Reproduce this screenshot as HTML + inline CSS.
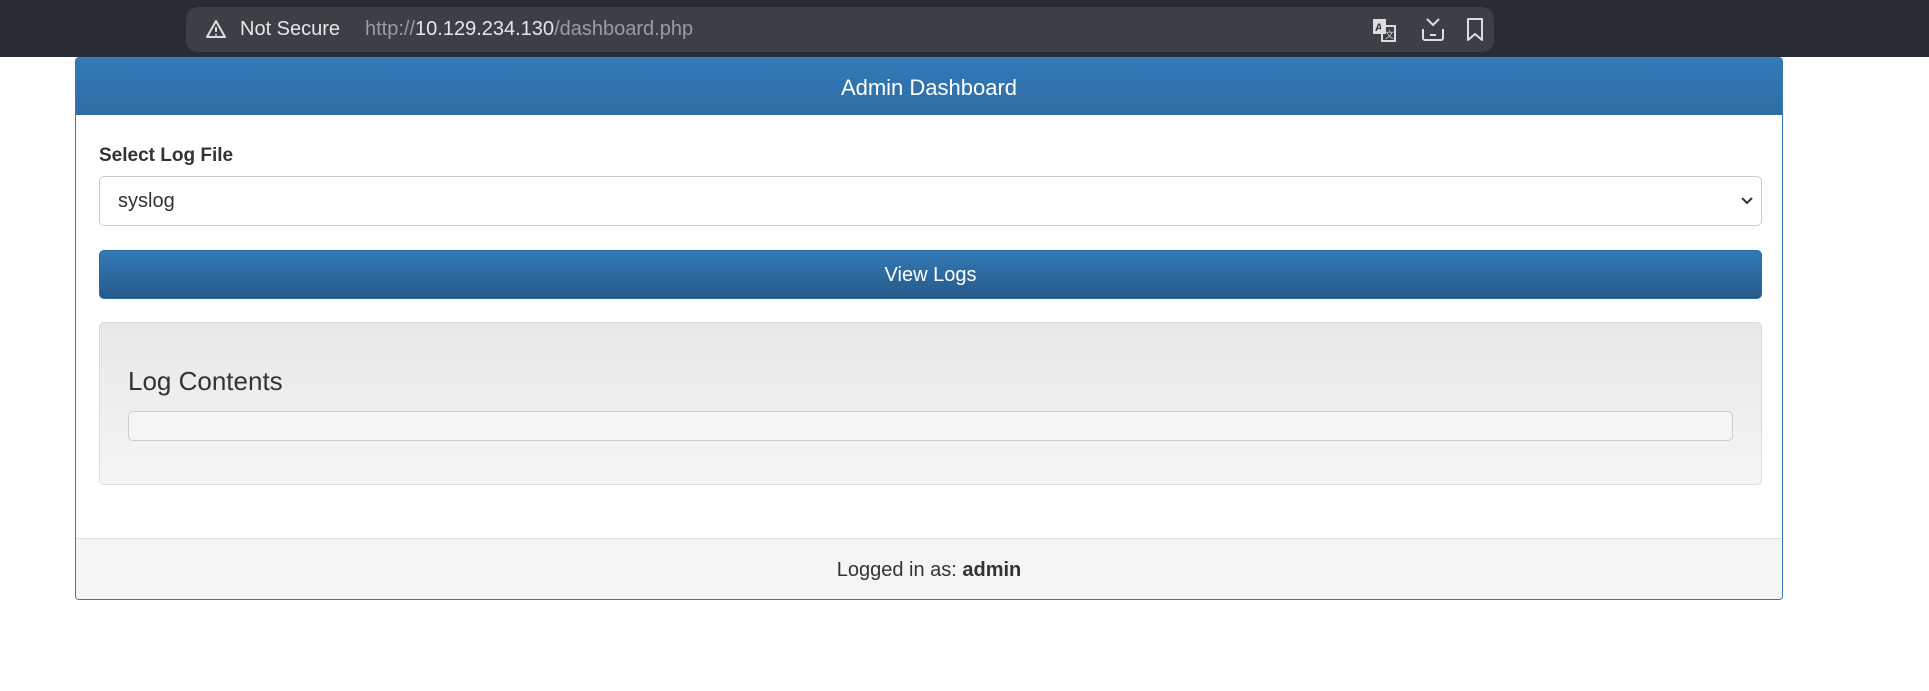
<!DOCTYPE html>
<html><head><style>
*{box-sizing:border-box;margin:0;padding:0}
body{width:1929px;height:691px;background:#fff;font-family:"Liberation Sans",Arial,sans-serif;position:relative;overflow:hidden;color:#333}
.top{position:absolute;left:0;top:0;width:1929px;height:57px;background:#2a2c34}
.url{position:absolute;left:186px;top:7px;width:1308px;height:45px;background:#3d3f47;border-radius:12px;color:#e6e6e6;font-size:20px;line-height:45px}
.card{position:absolute;left:75px;top:57px;width:1708px;height:543px;border:1px solid #337ab7;border-radius:4px;overflow:hidden}
.hd{height:57px;background:linear-gradient(#337ab7,#2e6da4);color:#fff;font-size:22px;text-align:center;line-height:59px}
.lbl{position:absolute;left:23px;top:87px;font-weight:bold;font-size:19px}
.sel{position:absolute;left:23px;top:118px;width:1663px;height:50px;border:1px solid #ccc;border-radius:5px;font-size:20px;line-height:48px;padding-left:18px;color:#333}
.btn{position:absolute;left:23px;top:192px;width:1663px;height:49px;border:1px solid #2e6da4;border-radius:5px;background:linear-gradient(#337ab7,#265a88);color:#fff;font-size:20px;text-align:center;line-height:48px}
.well{position:absolute;left:23px;top:264px;width:1663px;height:163px;border:1px solid #dcdcdc;border-radius:5px;background:linear-gradient(#e8e8e8,#f5f5f5)}
.well h3{position:absolute;left:28px;top:43px;font-weight:normal;font-size:26px;color:#333}
.pre{position:absolute;left:28px;top:88px;width:1605px;height:30px;border:1px solid #ccc;border-radius:5px;background:#f5f5f5}
.ft{position:absolute;left:0;bottom:0;width:100%;height:61px;background:#f5f5f5;border-top:1px solid #ddd;text-align:center;font-size:20px;line-height:62px;color:#333}
</style></head><body>
<div class="top"><div class="url">
<svg style="position:absolute;left:19px;top:12px" width="22" height="20" viewBox="0 0 22 20"><path d="M11 2 L20 18 H2 Z" fill="none" stroke="#ddd" stroke-width="2" stroke-linejoin="round"/><path d="M11 8v5M11 15v1.5" stroke="#ddd" stroke-width="2"/></svg>
<span style="position:absolute;left:54px">Not Secure</span>
<span style="position:absolute;left:179px;color:#9a9ca3">http://<span style="color:#e6e6e6">10.129.234.130</span>/dashboard.php</span>
<svg style="position:absolute;left:1186px;top:11px" width="26" height="24" viewBox="0 0 26 24"><rect x="1" y="1" width="13" height="15" fill="#ddd"/><text x="3" y="13" font-size="11" font-weight="bold" fill="#333" font-family="Liberation Sans">A</text><rect x="10" y="8" width="13" height="15" fill="none" stroke="#ddd" stroke-width="2"/><text x="13" y="20" font-size="9" fill="#ddd" font-family="Liberation Sans">文</text></svg>
<svg style="position:absolute;left:1234px;top:10px" width="26" height="26" viewBox="0 0 26 26"><path d="M7 2l6 6 6-6M3 12v9a2 2 0 0 0 2 2h16a2 2 0 0 0 2-2v-9M10 18h6" fill="none" stroke="#ddd" stroke-width="2"/></svg>
<svg style="position:absolute;left:1279px;top:10px" width="20" height="26" viewBox="0 0 20 26"><path d="M3 2h14v21l-7-6-7 6z" fill="none" stroke="#ddd" stroke-width="2" stroke-linejoin="round"/></svg>
</div></div>
<div class="card">
<div class="hd">Admin Dashboard</div>
<div class="lbl">Select Log File</div>
<div class="sel">syslog<svg style="position:absolute;right:8px;top:19px" width="12" height="10" viewBox="0 0 12 10"><path d="M1 2l5 5 5-5" fill="none" stroke="#333" stroke-width="2"/></svg></div>
<div class="btn">View Logs</div>
<div class="well"><h3>Log Contents</h3><div class="pre"></div></div>
<div class="ft">Logged in as: <b>admin</b></div>
</div>
</body></html>
